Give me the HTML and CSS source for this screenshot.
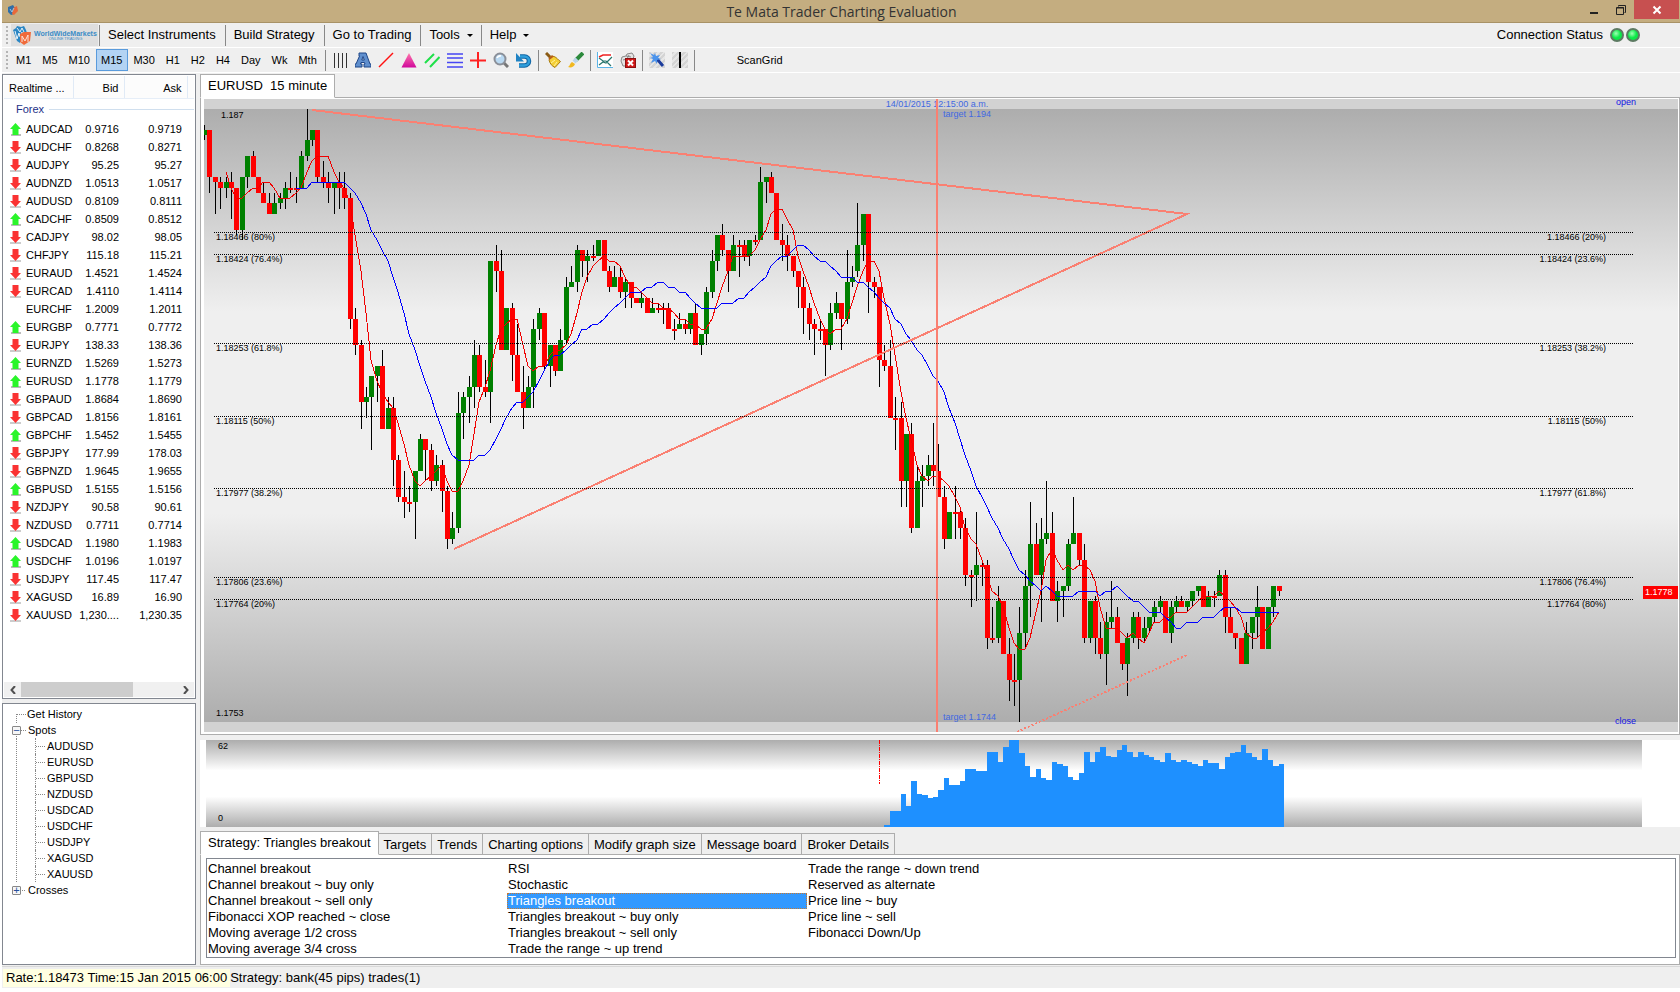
FILE: index.html
```
<!DOCTYPE html>
<html lang="en">

<head>
    <meta charset="utf-8">
    <title>Te Mata Trader Charting Evaluation</title>
    <link rel="stylesheet" href="styles.css">
</head>

<body>
    <div class="app">
        <header class="titlebar">
            <svg class="app-icon" width="12" height="12" viewBox="0 0 12 12">
                <path d="M1 3l5-2 2 3-1 6-3 1-3-3z" fill="#2f6fa8" />
                <path d="M6 4l4-2 1 5-4 4-2-1z" fill="#e8693a" />
                <path d="M3 5l2 3 2-4" stroke="#9fc4e0" fill="none" />
            </svg>
            <h1 class="title">Te Mata Trader Charting Evaluation</h1>
            <div class="window-buttons">
                <button class="win-btn" aria-label="Minimize"><svg width="10" height="12" viewBox="0 0 10 12"><path d="M1 8h8v2H1z" fill="#222" /></svg></button>
                <button class="win-btn" aria-label="Restore"><svg width="12" height="12" viewBox="0 0 12 12"><path d="M1.500 4v6.500h7v-7h-7M1 4h8M3.500 2.500v-1h7v7h-1" fill="none" stroke="#222" /></svg></button>
                <button class="win-btn close" aria-label="Close"><svg width="10" height="10" viewBox="0 0 10 10"><path d="M1.500 1.500l7 7M8.500 1.500l-7 7" stroke="#fff" stroke-width="2" /></svg></button>
            </div>
        </header>

        <nav class="menubar">
            <span class="grip"></span>
            <div class="logo">
                <svg width="20" height="20" viewBox="0 0 20 20">
                    <path d="M1 5l3-2 1-2 4 1 3-1 2 4 1 3-6-1-1 11-3-2z" fill="#2a86c4" />
                    <path d="M3 6l2 8 2-6 1 4M5 3l3 4 2-4 2 4" fill="none" stroke="#e8f2f8" />
                    <path d="M8 9l4-2 7 0-1 9-6 4-4-3z" fill="#f06a3a" />
                    <path d="M10 17V11l3 5 3-6v7" fill="none" stroke="#fbe3d8" />
                </svg>
                <span class="logo-text"><b>WorldWideMarkets</b><small>ONLINE TRADING</small></span>
            </div>
            <button class="menu">Select Instruments</button>
            <button class="menu">Build Strategy</button>
            <button class="menu">Go to Trading</button>
            <button class="menu drop">Tools</button>
            <button class="menu drop">Help</button>
            <div class="connection">Connection Status
                <span class="led"></span><span class="led"></span>
            </div>
        </nav>

        <div class="toolbar">
            <span class="grip"></span>
            <button class="frame">M1</button>
            <button class="frame">M5</button>
            <button class="frame">M10</button>
            <button class="frame active">M15</button>
            <button class="frame">M30</button>
            <button class="frame">H1</button>
            <button class="frame">H2</button>
            <button class="frame">H4</button>
            <button class="frame">Day</button>
            <button class="frame">Wk</button>
            <button class="frame">Mth</button>
            <span class="sep"></span>
            <button class="tool" aria-label="Bars"><svg viewBox="0 0 16 16"><path d="M2.500 1v15M6.500 1v15M10.500 1v15M14.500 1v15" stroke="#333" /></svg></button>
            <button class="tool" aria-label="Text"><svg viewBox="0 0 16 16"><path fill-rule="evenodd" d="M5 1h6l4 11h1v3H9v-3h1l-.500-1.500H6L5.500 12H7v3H0v-3h1L4.500 4H4V1zM8 4.500L6.800 8h2.500z" fill="#5f8fce" stroke="#1f4688" /></svg></button>
            <button class="tool" aria-label="Trend line"><svg viewBox="0 0 16 16"><path d="M1 15L15 1" stroke="#f11" stroke-width="1.500" /></svg></button>
            <button class="tool" aria-label="Triangle"><svg viewBox="0 0 16 16"><defs><linearGradient id="pink" x2="0" y2="1"><stop stop-color="#f7a" /><stop offset="1" stop-color="#d0089c" /></linearGradient></defs><path d="M8 1l7.500 14.500H.500z" fill="url(#pink)" /></svg></button>
            <button class="tool" aria-label="Channel"><svg viewBox="0 0 16 16"><path d="M1 11L10 2M6 15L15.500 5" stroke="#1fe04a" stroke-width="2" /></svg></button>
            <button class="tool" aria-label="Levels"><svg viewBox="0 0 16 16"><path d="M0 2h16M0 6h16M0 10.500h16M0 15h16" stroke="#4646f4" stroke-width="1.500" /></svg></button>
            <button class="tool" aria-label="Crosshair"><svg viewBox="0 0 16 16"><path d="M8 0v16M0 8.500h16" stroke="#f22" stroke-width="2" /></svg></button>
            <button class="tool" aria-label="Zoom"><svg viewBox="0 0 16 16"><path d="M11 11l4 4" stroke="#777" stroke-width="3" /><circle cx="7" cy="7" r="5.500" fill="#b9d9f2" stroke="#8a8f98" stroke-width="2" /><path d="M4 6a3.500 3.500 0 0 1 4-2" stroke="#fff" fill="none" stroke-width="1.500" /></svg></button>
            <button class="tool" aria-label="Undo"><svg viewBox="0 0 16 16"><path d="M4 4.500h4.500a4.500 4.500 0 0 1 0 9H3" fill="none" stroke="#0f65a4" stroke-width="4.500" /><path d="M4 4.500h4.500a4.500 4.500 0 0 1 0 9H3" fill="none" stroke="#2f9fdc" stroke-width="2.500" /><path d="M0 1v8.500h8z" fill="#1f83c4" /></svg></button>
            <span class="sep"></span>
            <button class="tool" aria-label="Clear"><svg viewBox="0 0 16 16"><path d="M1 1l5 5" stroke="#8a5a14" stroke-width="3" /><path d="M6 4l-2 4c1 4 3 6 6 7.500l5.500-6C13 8 12 5.500 9 4.500z" fill="#f4cf35" stroke="#a87b10" /><path d="M6 11l4-3M9 14l3-4" stroke="#fff2a0" /><path d="M4 7l4-3" stroke="#b85a1a" stroke-width="2" /></svg></button>
            <button class="tool" aria-label="Brush"><svg viewBox="0 0 16 16"><path d="M15 1L8 8" stroke="#2c8a3c" stroke-width="4" /><path d="M9 7l-3 3" stroke="#b9d4ea" stroke-width="4" /><path d="M0 15c2-1 2-4 4-5l3 2c-1 3-4 4-7 3z" fill="#f0b820" /></svg></button>
            <span class="sep"></span>
            <button class="tool" aria-label="Indicators"><svg viewBox="0 0 16 16"><path d="M0 0h16v16H0z" fill="#fff" /><path d="M.500 0v15.500H16" stroke="#5ab4e8" fill="none" /><path d="M2 5l4-2h8" stroke="#e22" fill="none" stroke-width="1.500" /><path d="M2 6l4 3 3 0 5 5M2 13l4-3 3 1 6-6" stroke="#28756c" fill="none" stroke-width="1.200" /></svg></button>
            <button class="tool" aria-label="Remove indicators"><svg viewBox="0 0 16 16"><path d="M1 9l1-4 4-1 1-2 5-1 2 3-1 3-4 1-2 6-4 0z" fill="#e4e4e4" stroke="#888" /><path d="M3 8l4-1 2-4M6 4l5 1" stroke="#888" fill="none" /><rect x="5.500" y="6.500" width="10" height="9" fill="#d01818" stroke="#8c1010" /><path d="M8 8.500l5 5M13 8.500l-5 5" stroke="#fff" stroke-width="2" /></svg></button>
            <span class="sep"></span>
            <button class="tool hatched" aria-label="Pointer"><svg viewBox="0 0 16 16"><path d="M8 7l6 7" stroke="#1c3c9c" stroke-width="3" /><path d="M1 1l4 2 1-2 1 3 4-1-2 3 3 1-4 1 0 4-2-3-4 2 2-4-3-1 3-1z" fill="#4c94ec" /></svg></button>
            <button class="tool hatched" aria-label="Vertical line"><svg viewBox="0 0 16 16"><path d="M8 0v16" stroke="#000" stroke-width="2" /></svg></button>
            <span class="sep"></span>
            <button class="frame scan">ScanGrid</button>
        </div>

        <div class="workspace">
            <aside class="sidebar">
                <section class="watchlist">
                    <table class="quotes">
                        <thead>
                            <tr><th class="c-name">Realtime ...</th><th class="c-bid">Bid</th><th class="c-ask">Ask</th><th></th></tr>
                        </thead>
                        <tbody id="quotes">
                            <tr><td class="group" colspan="4"><span>Forex</span></td></tr>
                        </tbody>
                    </table>
                    <div class="scrollbar">
                        <button class="scroll-btn" aria-label="Scroll left"><svg width="6" height="8" viewBox="0 0 6 8"><path d="M5 0L1.500 4 5 8" fill="none" stroke="#505050" stroke-width="2" /></svg></button>
                        <span class="track"><span class="thumb"></span></span>
                        <button class="scroll-btn" aria-label="Scroll right"><svg width="6" height="8" viewBox="0 0 6 8"><path d="M1 0l3.500 4L1 8" fill="none" stroke="#505050" stroke-width="2" /></svg></button>
                    </div>
                </section>
                <ul class="tree">
                    <li class="node">Get History</li>
                    <li class="node"><button class="expander" aria-label="Collapse">&minus;</button>Spots</li>
                    <li>
                        <ul class="branch">
                            <li>AUDUSD</li>
                            <li>EURUSD</li>
                            <li>GBPUSD</li>
                            <li>NZDUSD</li>
                            <li>USDCAD</li>
                            <li>USDCHF</li>
                            <li>USDJPY</li>
                            <li>XAGUSD</li>
                            <li>XAUUSD</li>
                        </ul>
                    </li>
                    <li class="node"><button class="expander" aria-label="Expand">+</button>Crosses</li>
                </ul>
            </aside>

            <main class="content">
                <div class="tabs">
                    <button class="tab selected">EURUSD&nbsp; 15 minute</button>
                </div>
                <section class="chart-panel">
                    <div class="chart">
                        <svg class="plot" id="plot"></svg>
                        <div class="levels" id="levels"></div>
                        <span class="edge open">open</span>
                        <span class="edge shut">close</span>
                        <span class="price-tag">1.1778</span>
                    </div>
                </section>
                <section class="volume-panel">
                    <svg class="volume" id="volume"></svg>
                </section>

                <div class="tabs">
                    <button class="tab selected">Strategy: Triangles breakout</button>
                    <button class="tab">Targets</button>
                    <button class="tab">Trends</button>
                    <button class="tab">Charting options</button>
                    <button class="tab">Modify graph size</button>
                    <button class="tab">Message board</button>
                    <button class="tab">Broker Details</button>
                </div>
                <section class="strategy-panel">
                    <div class="strategies">
                        <button class="strategy">Channel breakout</button>
                        <button class="strategy">Channel breakout ~ buy only</button>
                        <button class="strategy">Channel breakout ~ sell only</button>
                        <button class="strategy">Fibonacci XOP reached ~ close</button>
                        <button class="strategy">Moving average 1/2 cross</button>
                        <button class="strategy">Moving average 3/4 cross</button>
                        <button class="strategy">RSI</button>
                        <button class="strategy">Stochastic</button>
                        <button class="strategy chosen">Triangles breakout</button>
                        <button class="strategy">Triangles breakout ~ buy only</button>
                        <button class="strategy">Triangles breakout ~ sell only</button>
                        <button class="strategy">Trade the range ~ up trend</button>
                        <button class="strategy">Trade the range ~ down trend</button>
                        <button class="strategy">Reserved as alternate</button>
                        <button class="strategy">Price line ~ buy</button>
                        <button class="strategy">Price line ~ sell</button>
                        <button class="strategy">Fibonacci Down/Up</button>
                    </div>
                </section>
            </main>
        </div>

        <footer class="statusbar">
            <span class="rate">Rate:1.18473 Time:15 Jan 2015 06:00</span>
            <span>Strategy: bank(45 pips) trades(1)</span>
        </footer>
    </div>
    <script src="chart.js"></script>
</body>

</html>
```

FILE: styles.css
```
* {
    box-sizing: border-box;
}

body {
    margin: 0;
    background-color: white;
    color: black;
    font-family: "Liberation Sans", Arial, sans-serif;
    font-size: 13px;
    line-height: 16px;
}

button {
    font: inherit;
    color: inherit;
    background: none;
    border: 0;
    padding: 0;
    white-space: nowrap;
}

ul {
    list-style: none;
    margin: 0;
    padding: 0;
}

svg {
    display: block;
}

.app {
    margin-left: 2px;
    background-color: #efefef;
}

/* title bar */
.titlebar {
    display: flex;
    height: 23px;
    padding-left: 5px;
    background-color: #c4ad80;
    border-bottom: 1px solid #a89266;
}

.app-icon {
    margin-top: 4px;
}

.title {
    flex: 1;
    margin: 0;
    padding-left: 84px;
    text-align: center;
    font-family: "Open Sans", "Noto Sans", sans-serif;
    font-size: 14px;
    font-weight: normal;
    line-height: 23px;
    color: #333;
}

.window-buttons {
    display: flex;
    height: 19px;
    margin-right: 1px;
}

.win-btn {
    display: flex;
    align-items: center;
    justify-content: center;
    width: 27px;
}

.win-btn.close {
    width: 45px;
    background-color: #c75050;
}

/* menu and tool rows */
.menubar,
.toolbar {
    display: flex;
    align-items: center;
    height: 25px;
    border-bottom: 1px solid white;
}

.grip {
    width: 2px;
    height: 18px;
    margin: 0 3px 0 4px;
    background: repeating-linear-gradient(#b4b4b4 0 2px, #efefef 2px 4px);
}

.logo {
    display: flex;
    align-items: center;
    gap: 2px;
    width: 87px;
    height: 22px;
    margin-right: 1px;
    padding-left: 1px;
    background-color: #dedede;
}

.logo-text {
    display: flex;
    flex-direction: column;
    align-items: center;
    line-height: 7px;
    color: #3a8cc6;
}

.logo-text b {
    font-size: 7px;
}

.logo-text small {
    font-size: 4px;
    line-height: 4px;
}

.menu {
    height: 21px;
    padding: 0 9px 0 8px;
    border-left: 1px solid #888;
}

.drop {
    padding-right: 8px;
}

.drop::after {
    content: "";
    display: inline-block;
    margin: 0 0 2px 7px;
    border: 3px solid transparent;
    border-top-color: black;
    border-bottom: 0;
}

.connection {
    display: flex;
    align-items: center;
    gap: 2px;
    margin-left: auto;
    margin-right: 40px;
}

.led {
    width: 14px;
    height: 14px;
    border: 2px solid #5c7a62;
    border-radius: 50%;
    background: radial-gradient(circle at 40% 35%, #9fffb4, #0ce848 50%);
}

.led:first-of-type {
    margin-left: 5px;
}

.frame {
    height: 22px;
    padding: 0 5px 0 4px;
    border: 1px solid transparent;
    font-size: 11px;
}

.frame.active {
    background-color: #b3d3f3;
    border-color: #5a9bdc;
}

.sep {
    width: 1px;
    height: 21px;
    margin: 0 3px 0 2px;
    background-color: #888;
}

.tool {
    width: 23px;
    padding: 0 3px;
}

.tool svg {
    width: 16px;
    height: 16px;
}

.hatched svg {
    background: repeating-linear-gradient(135deg, #d4d4d4 0 2px, #e6e6e6 2px 4px);
}

.scan {
    margin-left: 34px;
}

/* workspace */
.workspace {
    display: flex;
    gap: 4px;
    padding: 1px 0;
}

.sidebar {
    display: flex;
    flex-direction: column;
    flex: none;
    width: 194px;
    gap: 4px;
    font-size: 11px;
}

.watchlist {
    display: flex;
    flex-direction: column;
    flex: 1;
    padding: 1px;
    background-color: white;
    border: 1px solid #828790;
}

.quotes {
    width: 100%;
    table-layout: fixed;
    border-collapse: collapse;
    text-align: right;
}

.quotes th {
    height: 22px;
    padding: 2px 5px 0;
    font-weight: normal;
    background-color: #fcfcfc;
    border-right: 1px solid #e0eaf6;
    border-bottom: 1px solid #e6eef8;
}

.quotes th:last-child {
    border-right: 0;
}

.quotes .c-name {
    width: 69px;
    text-align: left;
    white-space: nowrap;
}

.quotes .c-bid {
    width: 51px;
}

.quotes .c-ask {
    width: 63px;
}

.quotes td {
    height: 18px;
    padding: 0 5px 0 0;
}

.quotes .group {
    height: 22px;
    padding: 0 0 0 12px;
    color: #1e3287;
}

.group span {
    display: flex;
    align-items: center;
    gap: 5px;
}

.group span::after {
    content: "";
    flex: 1;
    height: 1px;
    background-color: #d0dfee;
}

.pair {
    display: flex;
    align-items: center;
    gap: 4px;
    padding-left: 5px;
}

.pair svg {
    flex: none;
    width: 13px;
    height: 13px;
}

.scrollbar {
    display: flex;
    height: 15px;
    margin-top: auto;
    background-color: #f0f0f0;
}

.scroll-btn {
    display: flex;
    align-items: center;
    justify-content: center;
    width: 17px;
}

.track {
    flex: 1;
}

.thumb {
    display: block;
    width: 72%;
    height: 100%;
    background-color: #cdcdcd;
}

.tree {
    min-height: 262px;
    padding: 2px 0 0 12px;
    background-color: white;
    border: 1px solid #828790;
}

.node,
.branch li {
    display: flex;
    align-items: center;
    height: 16px;
}

.node {
    position: relative;
    padding-left: 12px;
}

/* dotted guides between the nodes */
.node::before {
    content: "";
    position: absolute;
    left: 1px;
    top: 8px;
    width: 9px;
    height: 8px;
    border-left: 1px dotted #888;
    border-top: 1px dotted #888;
}

.node:last-child::before {
    height: 0;
    border-left: 0;
}

.expander {
    position: relative;
    width: 9px;
    height: 9px;
    margin: 0 7px 0 -15px;
    border: 1px solid #888;
    border-radius: 1px;
    background-color: #f6f6f6;
    color: #274f9c;
    line-height: 7px;
}

.branch {
    margin-left: 1px;
    padding-left: 18px;
    border-left: 1px dotted #888;
}

.branch li {
    border-left: 1px dotted #888;
}

.branch li::before {
    content: "";
    width: 9px;
    margin-right: 2px;
    border-top: 1px dotted #888;
}

.content {
    flex: 1;
    min-width: 0;
}

/* tabs */
.tabs {
    display: flex;
    align-items: flex-end;
}

.tabs::after {
    content: "";
    flex: 1;
    border-bottom: 1px solid #adadad;
}

.tab {
    height: 22px;
    padding: 1px 5px 0;
    border: 1px solid #adadad;
    border-left-width: 0;
    background-color: #efefef;
}

.tab.selected {
    height: 24px;
    padding: 0 7px 1px;
    border-left-width: 1px;
    border-bottom-color: white;
    background-color: white;
}

/* price chart */
.chart-panel {
    padding: 1px 1px 2px 3px;
    background-color: white;
    border: 1px solid #adadad;
    border-top: 0;
}

.chart {
    position: relative;
    padding: 10px 0;
    background: linear-gradient(#adadad, #efefef 33%, #efefef 66%, #adadad) content-box, #d2d2d2;
    font-size: 9px;
    line-height: 10px;
}

.plot {
    width: 100%;
    height: 613px;
    overflow: visible;
    clip-path: inset(-10px 0);
}

.levels {
    position: absolute;
    top: 10px;
    left: 10px;
    right: 45px;
    line-height: 8px;
}

.level {
    position: absolute;
    width: 100%;
    display: flex;
    justify-content: space-between;
    padding: 0 27px 0 2px;
    border-top: 1px dotted black;
}

.edge {
    position: absolute;
    right: 42px;
    color: #1414e6;
}

.open {
    top: -2px;
}

.shut {
    bottom: 6px;
}

.price-tag {
    position: absolute;
    top: 487px;
    right: 0;
    width: 35px;
    padding: 1px 2px 2px;
    color: white;
    background-color: red;
}

.volume-panel {
    margin: 5px 0 4px;
    padding: 0 38px 0 6px;
    background-color: white;
}

.volume {
    width: 100%;
    height: 87px;
    background: linear-gradient(#adadad, white 35%, white 65%, #adadad);
    font-size: 9px;
}

/* strategies */
.strategy-panel {
    padding: 3px 3px 6px 5px;
    background-color: white;
    border: 1px solid #adadad;
    border-top: 0;
}

.strategies {
    display: grid;
    grid-auto-flow: column;
    grid-template-rows: repeat(6, 16px);
    grid-auto-columns: 300px;
    padding-top: 2px;
    border: 1px solid #828790;
}

.strategy {
    padding: 0 1px;
    text-align: left;
}

.strategy.chosen {
    color: white;
    background-color: #3399ff;
    outline: 1px dotted #c87830;
    outline-offset: -1px;
}

.statusbar {
    display: flex;
    align-items: center;
    height: 22px;
    padding-left: 1px;
    border-top: 1px solid #d8d8d8;
}

.rate {
    padding: 1px 3px;
    background-color: #ffffe1;
}
```

FILE: chart.js
```
const quotes = [
    ["up", "AUDCAD", "0.9716", "0.9719"], ["down", "AUDCHF", "0.8268", "0.8271"],
    ["down", "AUDJPY", "95.25", "95.27"], ["down", "AUDNZD", "1.0513", "1.0517"],
    ["down", "AUDUSD", "0.8109", "0.8111"], ["up", "CADCHF", "0.8509", "0.8512"],
    ["down", "CADJPY", "98.02", "98.05"], ["down", "CHFJPY", "115.18", "115.21"],
    ["down", "EURAUD", "1.4521", "1.4524"], ["down", "EURCAD", "1.4110", "1.4114"],
    ["", "EURCHF", "1.2009", "1.2011"], ["up", "EURGBP", "0.7771", "0.7772"],
    ["down", "EURJPY", "138.33", "138.36"], ["up", "EURNZD", "1.5269", "1.5273"],
    ["up", "EURUSD", "1.1778", "1.1779"], ["down", "GBPAUD", "1.8684", "1.8690"],
    ["down", "GBPCAD", "1.8156", "1.8161"], ["up", "GBPCHF", "1.5452", "1.5455"],
    ["down", "GBPJPY", "177.99", "178.03"], ["down", "GBPNZD", "1.9645", "1.9655"],
    ["up", "GBPUSD", "1.5155", "1.5156"], ["down", "NZDJPY", "90.58", "90.61"],
    ["down", "NZDUSD", "0.7711", "0.7714"], ["up", "USDCAD", "1.1980", "1.1983"],
    ["up", "USDCHF", "1.0196", "1.0197"], ["down", "USDJPY", "117.45", "117.47"],
    ["down", "XAGUSD", "16.89", "16.90"], ["down", "XAUUSD", "1,230....", "1,230.35"]
]

// high, open, close, low: pips below 1.1870
const candles = [
    [3,5,4,6],[4,4,13,16],[13,13,14,20],[13,14,15,19],[13,15,14,17],[12,14,15,21],[15,15,23,24],[13,23,13,25],[9,13,9,15],[8,9,13,13],
    [13,13,16,16],[14,16,18,18],[16,18,20,20],[16,20,18,20],[16,18,17,19],[14,17,15,19],[12,15,15,16],[13,15,15,18],[8,15,9,15],[0,9,6,10],
    [4,6,4,7],[4,4,13,14],[10,13,14,15],[12,14,15,18],[14,15,14,20],[12,14,15,19],[12,15,17,19],[16,17,40,42],[38,40,45,47],[44,45,56,61],
    [53,56,55,59],[51,55,51,65],[49,51,49,56],[46,49,61,61],[55,61,57,61],[55,57,67,72],[66,67,74,75],[69,74,75,78],[72,75,75,77],[69,75,69,82],
    [62,69,63,69],[63,63,65,71],[64,65,71,73],[66,71,68,72],[67,68,73,77],[72,73,82,84],[77,82,80,83],[54,80,58,81],[54,58,55,63],[51,55,53,60],
    [44,53,47,57],[45,47,53,54],[48,53,54,55],[29,54,29,60],[26,29,31,35],[27,31,46,46],[38,46,38,46],[37,38,47,52],[41,47,54,54],[49,54,57,61],
    [51,57,53,57],[40,53,42,57],[38,42,39,44],[39,39,49,50],[45,49,45,53],[45,45,50,51],[42,50,44,50],[32,44,34,45],[30,34,33,34],[26,33,27,35],
    [27,27,29,32],[27,29,28,33],[26,28,28,29],[25,28,25,28],[25,25,31,31],[30,31,34,35],[30,34,32,34],[30,32,35,36],[32,35,33,38],[33,33,36,38],
    [36,36,37,37],[35,37,36,38],[36,36,39,39],[36,39,38,39],[37,38,38,39],[37,38,38,41],[37,38,42,42],[40,42,42,44],[39,42,41,42],[40,41,42,43],
    [39,42,39,43],[37,39,45,45],[43,45,43,47],[34,43,35,45],[27,35,29,36],[24,29,24,31],[22,24,27,28],[27,27,31,35],[24,31,26,31],[25,26,26,32],
    [25,26,28,29],[25,28,25,30],[24,25,25,26],[11,25,14,25],[13,14,13,18],[12,13,16,16],[16,16,25,25],[22,25,26,29],[24,26,28,31],[28,28,31,32],
    [31,31,34,38],[32,34,38,43],[37,38,41,44],[40,41,42,47],[40,42,42,44],[42,42,45,51],[37,45,39,46],[35,39,37,40],[37,37,40,46],[27,40,33,41],
    [30,33,32,34],[18,31,26,32],[20,26,20,29],[20,20,33,39],[32,33,34,36],[34,34,48,53],[45,48,49,50],[44,49,59,59],[55,59,59,65],[56,59,71,76],
    [62,71,62,76],[60,62,80,81],[68,80,71,80],[68,71,70,76],[66,70,68,72],[60,68,69,72],[64,69,74,74],[72,74,82,84],[77,82,77,82],[72,77,77,82],
    [76,77,80,82],[78,80,89,91],[88,89,89,95],[77,89,87,94],[86,87,87,91],[86,87,101,103],[95,101,101,102],[91,101,94,102],[94,94,104,104],[101,104,109,113],
    [104,109,109,114],[95,109,100,117],[88,100,91,103],[75,91,83,97],[79,83,89,89],[78,89,82,98],[71,82,81,83],[77,81,94,94],[90,94,92,98],[91,92,91,97],
    [82,91,83,92],[74,83,81,83],[81,81,86,87],[83,86,101,102],[94,101,94,102],[93,94,101,104],[98,101,104,105],[96,104,98,110],[90,98,97,99],[95,97,102,102],
    [102,102,106,107],[100,106,101,112],[96,101,97,102],[96,97,101,103],[97,101,99,102],[97,99,97,100],[94,97,95,98],[93,95,94,96],[94,94,100,100],[94,100,95,102],
    [93,95,94,96],[93,94,95,95],[94,95,94,96],[92,94,92,95],[91,92,91,93],[91,91,95,95],[92,95,93,95],[92,93,93,95],[88,93,89,93],[88,89,97,100],
    [95,97,100,100],[100,100,101,103],[101,101,106,106],[98,106,100,106],[97,100,97,103],[91,97,95,101],[95,95,103,103],[95,103,95,103],[91,95,91,97],[91,91,92,93]
]

const bars = [
    2,16,16,33,21,46,33,32,29,30,37,49,42,42,46,58,58,56,56,75,75,65,80,87,87,74,61,50,58,49,47,65,63,61,50,47,54,
    75,65,75,80,71,70,77,82,75,70,75,72,70,67,65,74,67,65,67,65,63,61,67,64,64,58,70,74,75,82,74,70,67,78,67,61,63
]
const firstBar = 126

const levels = [
    [1.18466, "80%", "20%"], [1.18424, "76.4%", "23.6%"], [1.18253, "61.8%", "38.2%"], [1.18115, "50%", "50%"],
    [1.17977, "38.2%", "61.8%"], [1.17806, "23.6%", "76.4%"], [1.17764, "20%", "80%"]
]

const px = i => Math.round(i * 5.4)
const py = pips => Math.round(pips * 613 / 117)

function arrow(dir) {
    if (dir == "up") {
        return '<svg viewBox="0 0 13 13"><path d="M2 11h10v2H2z" fill="#bbb"/><path d="M6.500 0L12 6H9.500v6h-6V6H1z" fill="#2af52a"/></svg>'
    }
    if (dir == "down") {
        return '<svg viewBox="0 0 13 13"><path d="M1 11h11v2H1z" fill="#ccc"/><path d="M3.500 0h6v6H12l-5.500 6L1 6h2.500z" fill="#fa3232"/></svg>'
    }
    return '<svg viewBox="0 0 13 13"></svg>'
}

// simple moving average of the median price, to the nearest pip
function average(period, color) {
    let points = []
    for (let i = period - 1; i < candles.length; i++) {
        let sum = 0
        for (let j = i - period + 1; j <= i; j++) {
            sum += (candles[j][0] + candles[j][3]) / 2
        }
        points.push(px(i) + "," + py(Math.ceil(sum / period - 0.5)))
    }
    return `<polyline points="${points.join(" ")}" fill="none" stroke="${color}"/>`
}

function drawQuotes() {
    let rows = ""
    for (const [dir, name, bid, ask] of quotes) {
        rows += `<tr><td><span class="pair">${arrow(dir)}${name}</span></td><td>${bid}</td><td>${ask}</td><td></td></tr>`
    }
    document.getElementById("quotes").innerHTML += rows
}

function drawChart() {
    let out = '<g shape-rendering="crispEdges">'
    candles.forEach(([high, open, close, low], i) => {
        let x = px(i)
        let top = py(Math.min(open, close))
        let height = Math.max(py(Math.max(open, close)) - top, 2)
        out += `<rect x="${x}" y="${py(high)}" width="1" height="${py(low) - py(high)}"/>`
        out += `<rect x="${x - 2}" y="${top}" width="5" height="${height}" fill="${close < open ? "#008000" : "#f00"}"/>`
    })
    out += average(5, "#f00000") + average(18, "#0000ff")
    out += '</g><g fill="#4169e1">'
    out += '<text x="733" y="-2" text-anchor="middle">14/01/2015 12:15:00 a.m.</text>'
    out += '<text x="739" y="8">target 1.194</text><text x="739" y="611">target 1.1744</text></g>'
    out += '<text x="17" y="9">1.187</text><text x="12" y="607">1.1753</text>'
    out += '<g fill="none" stroke="#fa8072" stroke-width="2" shape-rendering="crispEdges">'
    out += '<path d="M108 1L983 105L250 440M733 -10V623"/>'
    out += '<path d="M813 623L983 546" stroke-dasharray="2 2"/></g>'
    document.getElementById("plot").innerHTML = out
}

function drawLevels() {
    let out = ""
    for (const [price, left, right] of levels) {
        out += `<div class="level" style="top: ${py((1.187 - price) * 10000)}px"><span>${price} (${left})</span><span>${price} (${right})</span></div>`
    }
    document.getElementById("levels").innerHTML = out
}

function drawVolume() {
    let out = ""
    bars.forEach((height, i) => {
        let x = px(firstBar + i)
        out += `<rect x="${x - 2}" y="${87 - height}" width="${px(firstBar + i + 1) - x}" height="${height}" fill="#1e90ff"/>`
    })
    out += '<path d="M673.500 0v44" stroke="red" stroke-dasharray="4 1 1 1"/>'
    out += '<text x="12" y="9">62</text><text x="12" y="81">0</text>'
    document.getElementById("volume").innerHTML = out
}

drawQuotes()
drawChart()
drawLevels()
drawVolume()
```
